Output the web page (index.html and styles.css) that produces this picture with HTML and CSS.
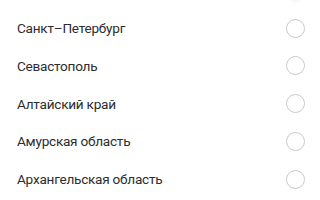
FILE: index.html
```html
<!DOCTYPE html>
<html>
<head>
<meta charset="utf-8">
<link rel="stylesheet" href="styles.css">
</head>
<body>
<ul class="list">
  <li class="row row-hidden"><span class="label"></span><span class="radio radio-pressed"></span></li>
  <li class="row"><span class="label">Санкт–Петербург</span><span class="radio"></span></li>
  <li class="row"><span class="label">Севастополь</span><span class="radio"></span></li>
  <li class="row"><span class="label">Алтайский край</span><span class="radio"></span></li>
  <li class="row"><span class="label">Амурская область</span><span class="radio"></span></li>
  <li class="row"><span class="label">Архангельская область</span><span class="radio"></span></li>
</ul>
</body>
</html>
```
FILE: styles.css
```css
html, body {
  margin: 0;
  padding: 0;
  background: #ffffff;
  overflow: hidden;
}
body {
  width: 320px;
  height: 200px;
  font-family: Roboto, "Liberation Sans", Arial, sans-serif;
}
.list {
  list-style: none;
  margin: -28.6px 0 0 0;
  padding: 0;
}
.row {
  height: 37.75px;
  display: flex;
  align-items: center;
  justify-content: space-between;
  padding: 0 15px 0 17px;
}
.label {
  font-size: 13.6px;
  color: #2c2d2e;
  letter-spacing: -0.25px;
}
.radio {
  width: 17px;
  height: 17px;
  border: 1.5px solid #c9cacc;
  border-radius: 50%;
  box-sizing: content-box;
}
.radio-pressed {
  border-color: transparent;
  background: radial-gradient(circle, #ececec 0%, #f4f4f4 55%, rgba(255,255,255,0) 75%);
  transform: scale(1.4);
}
```
